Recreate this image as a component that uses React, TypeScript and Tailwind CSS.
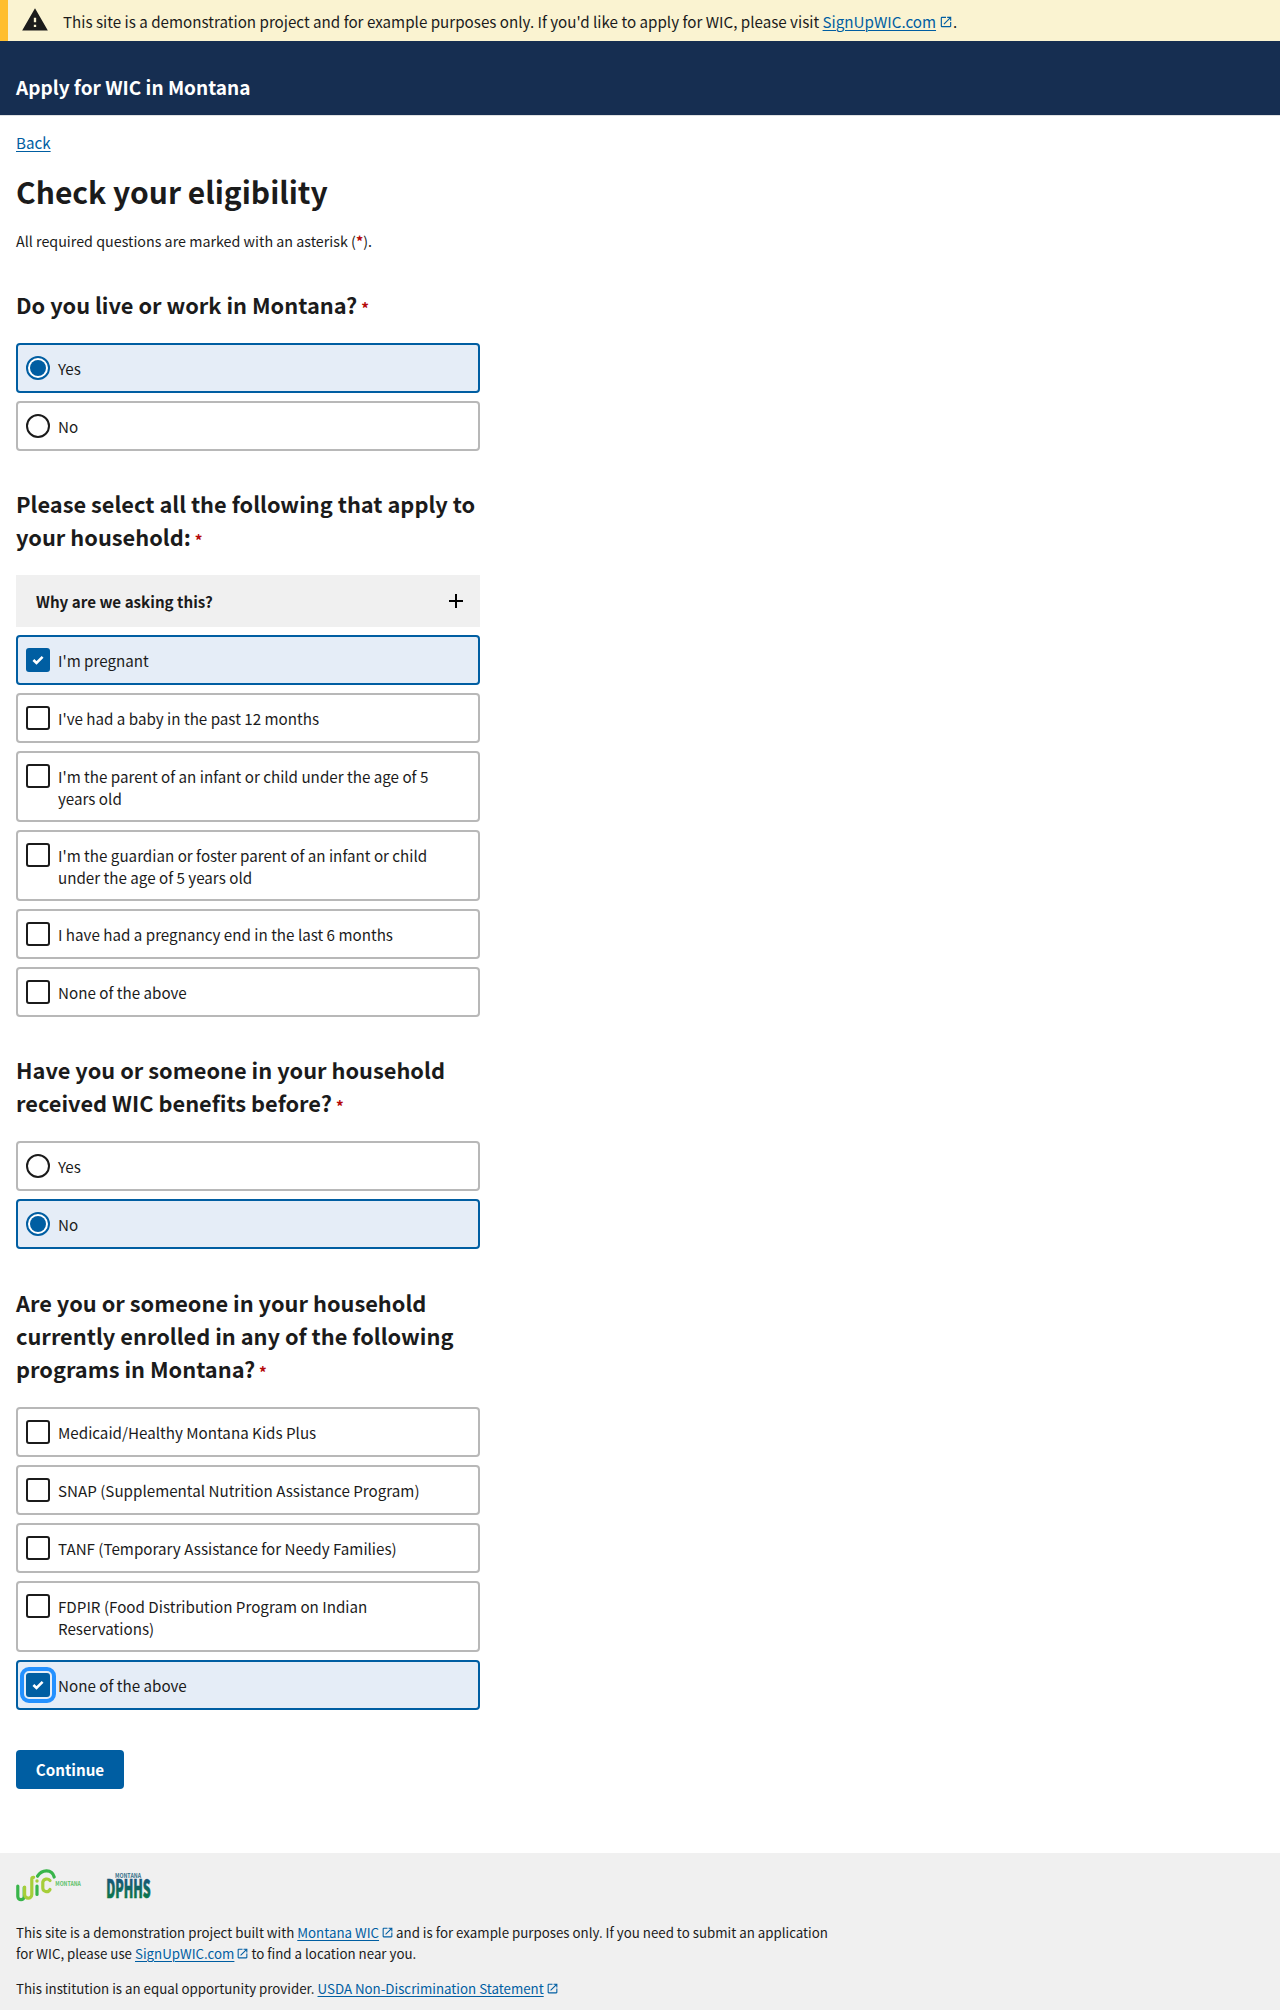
import type { ReactNode } from "react";

function Asterisk({ className = "" }: { className?: string }) {
  return <abbr className={`font-bold text-[#b50909] no-underline ${className}`}>*</abbr>;
}

function ExternalIcon({ className }: { className: string }) {
  return (
    <svg viewBox="0 0 24 24" className={className} fill="#005ea2" aria-hidden="true">
      <path d="M19 19H5V5h7V3H5a2 2 0 0 0-2 2v14a2 2 0 0 0 2 2h14c1.1 0 2-.9 2-2v-7h-2v7zM14 3v2h3.59l-9.83 9.83 1.41 1.41L19 6.41V10h2V3h-7z" />
    </svg>
  );
}

function Link({ children }: { children: ReactNode }) {
  return (
    <a href="#" className="text-[#005ea2] underline decoration-1 underline-offset-2">
      {children}
    </a>
  );
}

type Kind = "radio" | "checkbox";

function Mark({ kind, checked, focused }: { kind: Kind; checked?: boolean; focused?: boolean }) {
  if (kind === "radio") {
    return checked ? (
      <span className="size-6 shrink-0 rounded-full border-2 border-[#005ea2] bg-white p-0.5">
        <span className="block size-full rounded-full bg-[#005ea2]" />
      </span>
    ) : (
      <span className="size-6 shrink-0 rounded-full border-2 border-[#1b1b1b] bg-white" />
    );
  }
  if (!checked) {
    return <span className="size-6 shrink-0 rounded-[3px] border-2 border-[#1b1b1b] bg-white" />;
  }
  return (
    <span
      className={`flex size-6 shrink-0 items-center justify-center rounded-[3px] bg-[#005ea2] ${
        focused ? "outline-4 outline-offset-2 outline-[#2491ff]" : ""
      }`}
    >
      <svg viewBox="0 0 12 10" className="mb-px h-[10px] w-3" aria-hidden="true">
        <path d="M1.4 5 4.5 8 10.6 1.9" fill="none" stroke="#fff" strokeWidth="2.6" />
      </svg>
    </span>
  );
}

type Choice = { label: string; checked?: boolean; focused?: boolean };

function Option({ kind, label, checked, focused }: Choice & { kind: Kind }) {
  return (
    <label
      className={`flex gap-2 rounded-[4px] border-2 py-[11px] pr-3 pl-2 ${
        checked ? "border-[#005ea2] bg-[#e5edf7]" : "border-[#b8b8b8] bg-white"
      }`}
    >
      <Mark kind={kind} checked={checked} focused={focused} />
      <span className="pt-px text-[15.18px] leading-[22px]">{label}</span>
    </label>
  );
}

function Question({
  title,
  kind,
  choices,
  className,
  children,
}: {
  title: string;
  kind: Kind;
  choices: Choice[];
  className: string;
  children?: ReactNode;
}) {
  return (
    <fieldset className={className}>
      <legend className="mb-[22px] text-[21.8px] leading-[33px] font-bold">
        {title}
        <Asterisk className="ml-1 text-[15.18px] leading-none" />
      </legend>
      <div className="flex flex-col gap-2">
        {children}
        {choices.map((c) => (
          <Option key={c.label} kind={kind} {...c} />
        ))}
      </div>
    </fieldset>
  );
}

function WicLogo() {
  return (
    <svg viewBox="0 0 66 33" className="h-[33px] w-[66px]" aria-label="Montana WIC">
      <g fill="none" strokeWidth="3.2" strokeLinecap="round">
        <path d="M1.8 17V27.5a3.2 3.2 0 0 0 6.4 0V18.5" stroke="#39b54a" />
        <path d="M8.6 18V25.5a3.6 3.6 0 0 0 7.2 0V10.2Q15.8 8.2 17.6 8.4" stroke="#a6ce39" />
        <path d="M21 17V25.5" stroke="#39b54a" />
        <path d="M34 11.5A4.2 4.2 0 0 0 26.8 13V18.5A3.8 3.8 0 0 0 34 20.5" stroke="#a6ce39" />
        <path d="M21.5 7.2C26 0 36 0 38.2 8" stroke="#39b54a" />
      </g>
      <circle cx="21" cy="12" r="1.7" fill="#a6ce39" />
      <text x="39.3" y="17" textLength="25.5" lengthAdjust="spacingAndGlyphs" fontSize="6" fontWeight="700" fill="#5cc168">
        MONTANA
      </text>
    </svg>
  );
}

function DphhsLogo() {
  return (
    <svg viewBox="0 0 45 26" className="h-[26px] w-[45px]" aria-label="Montana DPHHS">
      <defs>
        <linearGradient id="dphhs" x1="0" y1="0" x2="0" y2="1">
          <stop offset="0.3" stopColor="#17577a" />
          <stop offset="0.85" stopColor="#0b7a45" />
        </linearGradient>
      </defs>
      <text x="9" y="5" textLength="26" lengthAdjust="spacingAndGlyphs" fontSize="6.4" fontWeight="700" fill="#35708a">
        MONTANA
      </text>
      <text x="0.2" y="25.2" textLength="44.5" lengthAdjust="spacingAndGlyphs" fontSize="25.5" fontWeight="900" fill="url(#dphhs)" stroke="url(#dphhs)" strokeWidth="0.7">
        DPHHS
      </text>
    </svg>
  );
}

export default function App() {
  return (
    <div className="flex min-h-[2010px] flex-col bg-white font-['Noto_Sans_CJK_SC',sans-serif] text-[15.18px] text-[#1b1b1b]">
      <div className="flex h-[41px] items-center border-l-8 border-[#ffbe2e] bg-[#faf3d1] pl-[13px]">
        <svg viewBox="0 0 24 24" className="-mt-px mr-[14px] size-7" fill="#1b1b1b" aria-hidden="true">
          <path d="M1 21h22L12 2 1 21zm12-3h-2v-2h2v2zm0-4h-2v-4h2v4z" />
        </svg>
        <p className="leading-6">
          This site is a demonstration project and for example purposes only. If you'd like to apply for WIC, please visit{" "}
          <Link>SignUpWIC.com</Link>
          <ExternalIcon className="ml-[3px] inline size-[14px] align-[-1px]" />.
        </p>
      </div>

      <header className="flex h-[75px] items-end border-b border-[#dfe1e2] bg-[#162e51] px-4 pb-[14px]">
        <div className="text-[19px] leading-7 font-bold text-white">Apply for WIC in Montana</div>
      </header>

      <main className="w-[496px] px-4 pt-[15px]">
        <div className="leading-[22px]">
          <Link>Back</Link>
        </div>
        <h1 className="mt-[17px] text-[30px] leading-[42px] font-bold">Check your eligibility</h1>
        <p className="mt-[17px] text-[14.3px] leading-6">
          All required questions are marked with an asterisk (<Asterisk />
          ).
        </p>

        <Question
          className="mt-[35px]"
          title="Do you live or work in Montana?"
          kind="radio"
          choices={[{ label: "Yes", checked: true }, { label: "No" }]}
        />
        <Question
          className="mt-9"
          title="Please select all the following that apply to your household:"
          kind="checkbox"
          choices={[
            { label: "I'm pregnant", checked: true },
            { label: "I've had a baby in the past 12 months" },
            { label: "I'm the parent of an infant or child under the age of 5 years old" },
            { label: "I'm the guardian or foster parent of an infant or child under the age of 5 years old" },
            { label: "I have had a pregnancy end in the last 6 months" },
            { label: "None of the above" },
          ]}
        >
          <button type="button" className="flex h-[52px] items-center justify-between bg-[#f0f0f0] pr-[17px] pl-5 font-bold">
            Why are we asking this?
            <svg viewBox="0 0 14 14" className="mr-0 size-[14px]" aria-hidden="true">
              <path d="M7 0V14M0 7H14" stroke="#000" strokeWidth="2" />
            </svg>
          </button>
        </Question>
        <Question
          className="mt-9"
          title="Have you or someone in your household received WIC benefits before?"
          kind="radio"
          choices={[{ label: "Yes" }, { label: "No", checked: true }]}
        />
        <Question
          className="mt-[37px]"
          title="Are you or someone in your household currently enrolled in any of the following programs in Montana?"
          kind="checkbox"
          choices={[
            { label: "Medicaid/Healthy Montana Kids Plus" },
            { label: "SNAP (Supplemental Nutrition Assistance Program)" },
            { label: "TANF (Temporary Assistance for Needy Families)" },
            { label: "FDPIR (Food Distribution Program on Indian Reservations)" },
            { label: "None of the above", checked: true, focused: true },
          ]}
        />
        <button type="button" className="mt-10 block h-[39px] w-[108px] rounded-[4px] bg-[#005ea2] font-bold text-white">
          Continue
        </button>
      </main>

      <footer className="mt-16 grow bg-[#f0f0f0] px-4 pt-4 text-[13.3px] leading-[21px]">
        <div className="flex h-[33px] items-start gap-6">
          <WicLogo />
          <div className="pt-1">
            <DphhsLogo />
          </div>
        </div>
        <p className="mt-5 w-[816px]">
          This site is a demonstration project built with <Link>Montana WIC</Link>
          <ExternalIcon className="mx-[2px] inline size-[13px] align-[-1px]" />
          and is for example purposes only. If you need to submit an application for WIC, please use{" "}
          <Link>SignUpWIC.com</Link>
          <ExternalIcon className="mx-[2px] inline size-[13px] align-[-1px]" />
          to find a location near you.
        </p>
        <p className="mt-[14px]">
          This institution is an equal opportunity provider. <Link>USDA Non-Discrimination Statement</Link>
          <ExternalIcon className="mx-[2px] inline size-[13px] align-[-1px]" />
        </p>
      </footer>
    </div>
  );
}
